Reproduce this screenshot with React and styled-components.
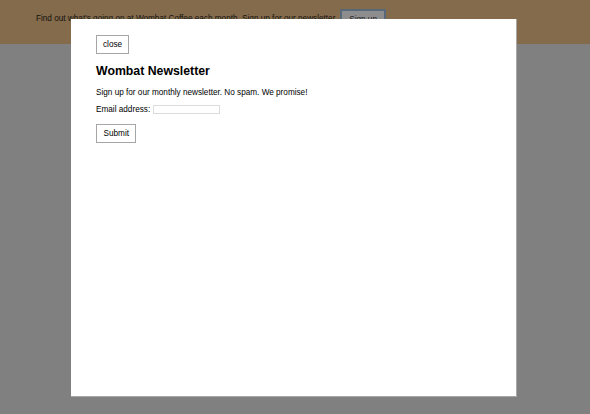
import React from "react"
import styled, { createGlobalStyle } from "styled-components"

const GlobalStyle = createGlobalStyle`
  html, body {
    margin: 0;
    padding: 0;
    background: #808080;
    font-family: "Liberation Sans", Arial, sans-serif;
    font-size: 8.2px;
    color: #111;
  }
`

const Page = styled.div`
  position: relative;
  width: 590px;
  height: 414px;
  overflow: hidden;
  background: #808080;
`

const Banner = styled.header`
  display: flex;
  align-items: center;
  gap: 3px;
  height: 44px;
  box-sizing: border-box;
  padding: 9px 36px 14px;
  background: #836b4c;
  color: #15120e;
`

const BannerText = styled.span`
  white-space: nowrap;
  margin-top: -2px;
`

const SignUpButton = styled.button`
  height: 22px;
  padding: 0 7px;
  font: inherit;
  color: #222;
  background: #8d8d8d;
  border: 2px solid #56687a;
  border-radius: 1px;
`

// the dialog sits over the page
const Modal = styled.div`
  position: absolute;
  left: 71px;
  top: 19px;
  width: 446px;
  height: 378px;
  box-sizing: border-box;
  background: #fff;
  border-right: 1px solid #a9a9a9;
  border-bottom: 1px solid #a9a9a9;
  padding: 16px 25px;
  display: flex;
  flex-direction: column;
  align-items: flex-start;
  color: #000;
`

const PlainButton = styled.button`
  font: inherit;
  font-size: 8.2px;
  color: #000;
  background: #fff;
  border: 1px solid #a6a6a6;
  padding: 0 ${props => props.$pad || 6}px;
  height: ${props => props.$h || 19}px;
  margin: 0;
`

const Title = styled.h1`
  margin: 10px 0 0;
  font-size: 12.3px;
  font-weight: bold;
  color: #000;
`

const Text = styled.p`
  margin: 10px 0 0;
`

const Field = styled.label`
  display: flex;
  align-items: center;
  margin-top: 7px;
  height: 11px;
`

const EmailInput = styled.input`
  width: 67px;
  height: 9px;
  box-sizing: border-box;
  margin: 0 0 0 3px;
  padding: 0;
  border: 1px solid #dcdcdc;
  background: #fff;
`

const Form = styled.form`
  display: flex;
  flex-direction: column;
  align-items: flex-start;
`

const SubmitRow = styled.div`
  margin-top: 9px;
`

function App() {
  return (
    <>
      <GlobalStyle />
      <Page>
        <Banner>
          <BannerText>
            Find out what's going on at Wombat Coffee each month. Sign up for our newsletter.
          </BannerText>
          <SignUpButton>Sign up</SignUpButton>
        </Banner>
        <Modal>
          <PlainButton>close</PlainButton>
          <Title>Wombat Newsletter</Title>
          <Text>Sign up for our monthly newsletter. No spam. We promise!</Text>
          <Form onSubmit={e => e.preventDefault()}>
            <Field>
              Email address:
              <EmailInput type="email" />
            </Field>
            <SubmitRow>
              <PlainButton $pad={6.5} $h={18.5}>Submit</PlainButton>
            </SubmitRow>
          </Form>
        </Modal>
      </Page>
    </>
  )
}

export default App
